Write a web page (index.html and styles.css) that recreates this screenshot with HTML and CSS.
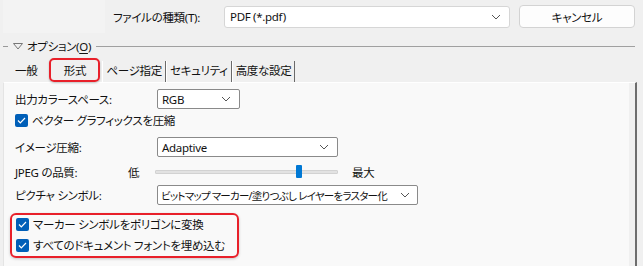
FILE: index.html
```html
<!DOCTYPE html>
<html lang="ja">
<head>
<meta charset="UTF-8">
<title>PDF エクスポート</title>
<link rel="stylesheet" href="styles.css">
</head>
<body>

<!-- ===== ファイル種類 ===== -->
<div class="top">
  <div class="thumb"></div>
  <label class="type-lbl">ファイルの種類(T):</label>
  <div class="combo wide">
    <span>PDF (*.pdf)</span>
    <svg class="chev" width="10" height="6" viewBox="0 0 10 6"><path d="M1 1l4 4 4-4" fill="none" stroke="#555" stroke-width="1"/></svg>
  </div>
  <button class="btn">キャンセル</button>
</div>

<!-- ===== オプション ===== -->
<div class="group-head">
  <span class="dash"></span>
  <svg class="tri" width="10" height="7" viewBox="0 0 10 7"><path d="M0.5 0.5h9L5 6z" fill="none" stroke="#777" stroke-width="1"/></svg>
  <span class="gtitle">オプション(<u>O</u>)</span>
  <span class="rule"></span>
</div>

<div class="tabs">
  <div class="tab first">一般</div>
  <div class="tab sel">形式</div>
  <div class="tab">ページ指定</div>
  <div class="tab">セキュリティ</div>
  <div class="tab">高度な設定</div>
</div>

<div class="panel">
  <div class="row r1">
    <span class="lbl">出力カラースペース:</span>
    <div class="combo sel-rgb">
      <span>RGB</span>
      <svg class="chev" width="10" height="6" viewBox="0 0 10 6"><path d="M1 1l4 4 4-4" fill="none" stroke="#555" stroke-width="1"/></svg>
    </div>
  </div>
  <div class="row r2">
    <span class="cb"><svg width="9" height="7" viewBox="0 0 9 7"><path d="M1 3.5l2.3 2.3L8 1" fill="none" stroke="#fff" stroke-width="1.2"/></svg></span>
    <span>ベクター グラフィックスを圧縮</span>
  </div>
  <div class="row r3">
    <span class="lbl">イメージ圧縮:</span>
    <div class="combo sel-img">
      <span>Adaptive</span>
      <svg class="chev" width="10" height="6" viewBox="0 0 10 6"><path d="M1 1l4 4 4-4" fill="none" stroke="#555" stroke-width="1"/></svg>
    </div>
  </div>
  <div class="row r4">
    <span class="lbl jpeg">JPEG の品質:</span>
    <span class="lo">低</span>
    <div class="slider"><span class="thumb-knob"></span></div>
    <span class="hi">最大</span>
  </div>
  <div class="row r5">
    <span class="lbl">ピクチャ シンボル:</span>
    <div class="combo sel-pic">
      <span class="tight">ビットマップ マーカー/塗りつぶし レイヤーをラスター化</span>
      <svg class="chev" width="10" height="6" viewBox="0 0 10 6"><path d="M1 1l4 4 4-4" fill="none" stroke="#555" stroke-width="1"/></svg>
    </div>
  </div>
  <div class="mark">
    <div class="row cbrow">
      <span class="cb"><svg width="9" height="7" viewBox="0 0 9 7"><path d="M1 3.5l2.3 2.3L8 1" fill="none" stroke="#fff" stroke-width="1.2"/></svg></span>
      <span>マーカー シンボルをポリゴンに変換</span>
    </div>
    <div class="row cbrow">
      <span class="cb"><svg width="9" height="7" viewBox="0 0 9 7"><path d="M1 3.5l2.3 2.3L8 1" fill="none" stroke="#fff" stroke-width="1.2"/></svg></span>
      <span>すべてのドキュメント フォントを埋め込む</span>
    </div>
  </div>
</div>

</body>
</html>
```

FILE: styles.css
```css
:root{
  --bg:#f0f0f0;
  --panel:#f9f9f9;
  --red:#e8202a;
  --blue:#005fb8;
}
*{box-sizing:border-box}
html,body{margin:0;padding:0;height:100%;overflow:hidden}
body{
  background:var(--bg);color:#111;
  font-family:"Noto Sans","Noto Sans CJK JP",sans-serif;
  font-size:11.5px;letter-spacing:-0.3px;font-feature-settings:"palt";
  white-space:nowrap;
}

/* ===== top row ===== */
.top{display:flex;align-items:center;height:33px}
.thumb{width:102px;height:33px;margin-left:3px;background:#f3f3f3;align-self:flex-start}
.type-lbl{margin-left:8px;width:111px;flex:none}
.combo{
  display:flex;align-items:center;justify-content:space-between;
  background:#fff;border:1px solid #d6d6d6;border-radius:3px;
  padding:0 8px 0 4px;height:20px;overflow:hidden;flex:none;
}
.combo.wide{width:286px;height:22px;padding-left:5px}
.chev{flex:none;margin-left:4px}
.btn{
  margin-left:9px;width:116px;height:23px;flex:none;
  background:#fdfdfd;border:1px solid #d3d3d3;border-radius:4px;
  font:inherit;letter-spacing:inherit;color:#111;padding:0;
}

/* ===== group head ===== */
.group-head{display:flex;align-items:center;height:26px}
.dash{width:5px;height:1px;background:#999;margin-left:3px;flex:none}
.tri{margin-left:5px;flex:none}
.gtitle{margin-left:4px;flex:none}
.gtitle u{text-decoration-thickness:1px;text-underline-offset:2px}
.rule{flex:1;height:1px;background:#a0a0a0;margin:0 8px 0 5px}

/* ===== tabs ===== */
.tabs{display:flex;align-items:flex-end;height:23px;margin-left:5px}
.tab{
  height:21px;line-height:20px;padding:0 3px;
  border-right:1px solid #6a6a6a;border-left:1px solid #fff;
}
.tab.first{border:none;padding:0 12px 0 10px;margin-right:0}
.tab.sel{
  border:2px solid var(--red);border-radius:5px;height:24px;line-height:22px;
  width:51px;text-align:center;margin-right:2px;
  box-shadow:0 1px 2px rgba(0,0,0,.25);
}

/* ===== panel ===== */
.panel{
  margin-left:3px;width:634px;height:184px;
  background:var(--panel);
  border-top:1px solid #fff;border-left:1px solid #e4e4e4;
  border-right:2px solid #6d6d6d;
  box-shadow:inset -6px 0 0 #f0f0f0;
  padding:6px 0 0 11px;
}
.row{display:flex;align-items:center;height:20px}
.lbl{width:142px;flex:none}
.cb{
  width:13px;height:13px;border-radius:2px;background:var(--blue);
  display:flex;align-items:center;justify-content:center;margin-right:4px;flex:none;
}
.combo.sel-rgb,.combo.sel-img,.combo.sel-pic{border-color:#8a8a8a;border-radius:2px}
.sel-rgb{width:83px}
.r2{margin-top:1px}
.r3{margin-top:7px}
.sel-img{width:181px}
.r4{margin-top:5px}
.lbl.jpeg{width:113px}
.lo{width:27px;flex:none}
.slider{position:relative;width:183px;height:4px;background:#e2e2e2;border:1px solid #d2d2d2;border-radius:1px;flex:none}
.thumb-knob{
  position:absolute;left:140px;top:-6px;width:6px;height:13px;
  background:#0078d4;border-radius:1px;
}
.hi{margin-left:14px}
.r5{margin-top:3px}
.sel-pic{width:261px;padding-right:7px;padding-left:3px}
.tight{font-size:10.5px;letter-spacing:-0.75px;min-width:0;overflow:hidden;flex:1}

.mark{
  margin:8px 0 0 -5px;width:229px;height:45px;
  border:2px solid var(--red);border-radius:6px;
  padding:0 0 0 4px;
  box-shadow:0 1px 3px rgba(0,0,0,.2);
}
.cbrow{height:18px}
.cbrow + .cbrow{margin-top:3px}
```
